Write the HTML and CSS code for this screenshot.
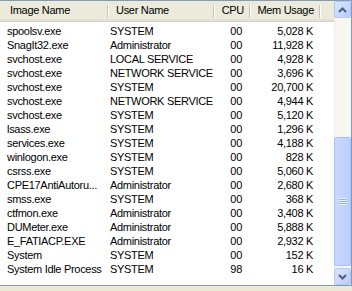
FILE: index.html
```html
<!DOCTYPE html>
<html lang="en">
<head>
    <meta charset="UTF-8">
    <title>Processes</title>
    <link rel="stylesheet" href="styles.css">
</head>
<body>
    <div class="listview">
        <div class="content">
            <div class="header">
                <div class="hcell c1">Image Name</div>
                <div class="hcell c2">User Name</div>
                <div class="hcell c3">CPU</div>
                <div class="hcell c4">Mem Usage</div>
            </div>
            <div class="rows">
                <div class="row"><span class="c1">spoolsv.exe</span><span class="c2">SYSTEM</span><span class="c3">00</span><span class="c4">5,028 K</span></div>
                <div class="row"><span class="c1">SnagIt32.exe</span><span class="c2">Administrator</span><span class="c3">00</span><span class="c4">11,928 K</span></div>
                <div class="row"><span class="c1">svchost.exe</span><span class="c2">LOCAL SERVICE</span><span class="c3">00</span><span class="c4">4,928 K</span></div>
                <div class="row"><span class="c1">svchost.exe</span><span class="c2">NETWORK SERVICE</span><span class="c3">00</span><span class="c4">3,696 K</span></div>
                <div class="row"><span class="c1">svchost.exe</span><span class="c2">SYSTEM</span><span class="c3">00</span><span class="c4">20,700 K</span></div>
                <div class="row"><span class="c1">svchost.exe</span><span class="c2">NETWORK SERVICE</span><span class="c3">00</span><span class="c4">4,944 K</span></div>
                <div class="row"><span class="c1">svchost.exe</span><span class="c2">SYSTEM</span><span class="c3">00</span><span class="c4">5,120 K</span></div>
                <div class="row"><span class="c1">lsass.exe</span><span class="c2">SYSTEM</span><span class="c3">00</span><span class="c4">1,296 K</span></div>
                <div class="row"><span class="c1">services.exe</span><span class="c2">SYSTEM</span><span class="c3">00</span><span class="c4">4,188 K</span></div>
                <div class="row"><span class="c1">winlogon.exe</span><span class="c2">SYSTEM</span><span class="c3">00</span><span class="c4">828 K</span></div>
                <div class="row"><span class="c1">csrss.exe</span><span class="c2">SYSTEM</span><span class="c3">00</span><span class="c4">5,060 K</span></div>
                <div class="row"><span class="c1">CPE17AntiAutoru...</span><span class="c2">Administrator</span><span class="c3">00</span><span class="c4">2,680 K</span></div>
                <div class="row"><span class="c1">smss.exe</span><span class="c2">SYSTEM</span><span class="c3">00</span><span class="c4">368 K</span></div>
                <div class="row"><span class="c1">ctfmon.exe</span><span class="c2">Administrator</span><span class="c3">00</span><span class="c4">3,408 K</span></div>
                <div class="row"><span class="c1">DUMeter.exe</span><span class="c2">Administrator</span><span class="c3">00</span><span class="c4">5,888 K</span></div>
                <div class="row"><span class="c1">E_FATIACP.EXE</span><span class="c2">Administrator</span><span class="c3">00</span><span class="c4">2,932 K</span></div>
                <div class="row"><span class="c1">System</span><span class="c2">SYSTEM</span><span class="c3">00</span><span class="c4">152 K</span></div>
                <div class="row"><span class="c1">System Idle Process</span><span class="c2">SYSTEM</span><span class="c3">98</span><span class="c4">16 K</span></div>
            </div>
        </div>
        <div class="scrollbar">
            <div class="sbtn">
                <svg width="9" height="6" viewBox="0 0 9 6"><polyline points="1,5 4.5,1.5 8,5" fill="none" stroke="#4d6185" stroke-width="2"/></svg>
            </div>
            <div class="thumb">
                <div class="grip"></div>
            </div>
            <div class="sbtn down">
                <svg width="9" height="6" viewBox="0 0 9 6"><polyline points="1,1 4.5,4.5 8,1" fill="none" stroke="#4d6185" stroke-width="2"/></svg>
            </div>
        </div>
    </div>
</body>
</html>
```

FILE: styles.css
```css
body {
    margin: 0;
    background: #ece9d8;
    font-family: "Liberation Sans", Arial, sans-serif;
    font-size: 11px;
    letter-spacing: -0.3px;
    color: #000;
}
.listview {
    width: 352px;
    height: 286px;
    box-sizing: border-box;
    border-top: 1px solid #7f9db9;
    border-right: 1px solid #7f9db9;
    border-bottom: 1px solid #7f9db9;
    background: #fff;
    display: flex;
}
.content {
    flex: 1;
    overflow: hidden;
}
.header {
    display: grid;
    grid-template-columns: 108px 106px 36px 70px;
    height: 20px;
    background: #ebeadb;
    border-bottom: 1px solid #d6d3c6;
    box-shadow: inset 0 -2px 0 #e2e2d5;
}
.hcell {
    position: relative;
    line-height: 19px;
    white-space: nowrap;
}
.hcell::after {
    content: "";
    position: absolute;
    right: 0;
    top: 4px;
    bottom: 3px;
    width: 1px;
    background: #c7c5b2;
    box-shadow: 1px 0 0 #fff;
}
.rows {
    padding-top: 2px;
}
.row {
    display: grid;
    grid-template-columns: 108px 106px 36px 70px;
    height: 14px;
    line-height: 14px;
    white-space: nowrap;
}
.row span {
    overflow: hidden;
}
.c1 { padding-left: 7px; }
.c2 { padding-left: 2px; }
.c3 { text-align: right; padding-right: 8px; }
.c4 { text-align: right; padding-right: 7px; }
.hcell.c1 { padding-left: 10px; }
.hcell.c2 { padding-left: 8px; }
.hcell.c3 { padding-right: 6px; }
.hcell.c4 { padding-right: 6px; }
.scrollbar {
    width: 17px;
    background: #f7f6f1;
    box-shadow: inset 1px 0 0 #eeede5;
    display: flex;
    flex-direction: column;
}
.sbtn {
    height: 17px;
    box-sizing: border-box;
    border: 1px solid #b4c8f6;
    border-radius: 2px;
    background: linear-gradient(135deg, #dbe6fe, #b9ccf9);
    display: flex;
    align-items: center;
    justify-content: center;
}
.sbtn.down {
    margin-top: auto;
}
.thumb {
    margin-top: 119px;
    height: 129px;
    box-sizing: border-box;
    border: 1px solid #a9bff6;
    border-radius: 2px;
    background: linear-gradient(90deg, #cad8fd, #bccffb);
    display: flex;
    align-items: center;
    justify-content: center;
}
.grip {
    width: 7px;
    height: 7px;
    background: repeating-linear-gradient(180deg, #eef4fe 0, #eef4fe 1px, #8cb0f8 1px, #8cb0f8 2px);
}
```
